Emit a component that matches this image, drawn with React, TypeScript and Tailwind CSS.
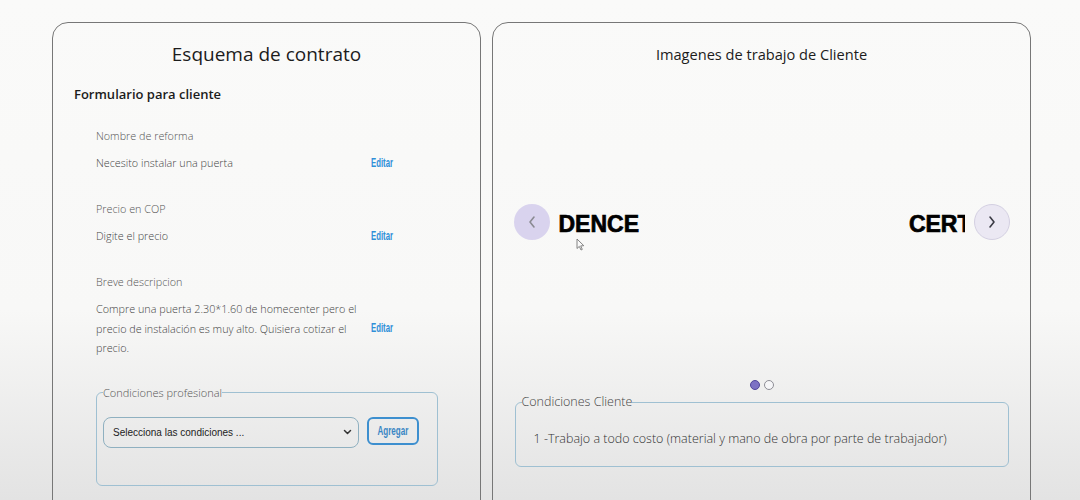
import React from "react";

const sans = "font-['Open_Sans',sans-serif]";

function Editar() {
  return (
    <span className="inline-block origin-left scale-x-[0.62] font-['Liberation_Sans',sans-serif] text-[12.5px] font-bold leading-[14px] text-[#2f8fd8]">
      Editar
    </span>
  );
}

function Row({ label, value }: { label: string; value: React.ReactNode }) {
  return (
    <div>
      <div className="text-[10.8px] font-light leading-[18px] text-[#555]">{label}</div>
      <div className="mt-[8px] grid grid-cols-[275px_auto] items-center">
        <div className="w-[262px] text-[10.8px] font-light leading-[19.5px] text-[#444]">{value}</div>
        <Editar />
      </div>
    </div>
  );
}

function Chevron({ dir, color }: { dir: "left" | "right"; color: string }) {
  return (
    <svg width="10" height="14" viewBox="0 0 10 14" fill="none">
      <path
        d={dir === "left" ? "M7 2 L3 7 L7 12" : "M3 2 L7 7 L3 12"}
        stroke={color}
        strokeWidth="1.6"
        strokeLinecap="round"
        strokeLinejoin="round"
      />
    </svg>
  );
}

export default function App() {
  return (
    <div
      className={`relative flex h-[500px] w-[1080px] gap-[11px] overflow-hidden bg-[linear-gradient(to_bottom,#fafaf9_0%,#f8f8f7_62%,#e3e3e3_100%)] pl-[52px] pt-[22px] ${sans}`}
    >
      {/* Left card */}
      <div className="h-[540px] w-[429px] shrink-0 rounded-[16px] border-[1.5px] border-[#777] pt-[17px]">
        <h1 className="text-center text-[19px] leading-[28px] text-[#1c1c1c]">Esquema de contrato</h1>
        <h2 className="mt-[16px] pl-[21px] text-[13px] font-semibold leading-[20px] text-[#1c1c1c]">
          Formulario para cliente
        </h2>
        <div className="mt-[23px] flex flex-col gap-[27.5px] pl-[43px]">
          <Row label="Nombre de reforma" value="Necesito instalar una puerta" />
          <Row label="Precio en COP" value="Digite el precio" />
          <Row
            label="Breve descripcion"
            value="Compre una puerta 2.30*1.60 de homecenter pero el precio de instalación es muy alto. Quisiera cotizar el precio."
          />
        </div>
        <fieldset className="ml-[43px] mt-[28px] w-[342px] rounded-[6px] border border-[#9fc0d2] px-[6px] pb-[37px]">
          <legend className="px-0 text-[11px] font-light leading-[14px] text-[#555]">Condiciones profesional</legend>
          <div className="mt-[17px] flex items-start gap-[8px]">
            <div className="flex h-[31px] w-[256px] items-center justify-between rounded-[8px] border border-[#8fb0c0] pl-[9px] pr-[6px] font-['Liberation_Sans',sans-serif] text-[10px] text-[#222]">
              <span>Selecciona las condiciones ...</span>
              <svg width="9" height="6" viewBox="0 0 9 6" fill="none">
                <path d="M1.5 1.5 L4.5 4.5 L7.5 1.5" stroke="#333" strokeWidth="1.5" strokeLinecap="round" strokeLinejoin="round" />
              </svg>
            </div>
            <div className="flex h-[28px] w-[52px] items-center justify-center rounded-[6px] border-2 border-[#3d8fcf]">
              <span className="inline-block scale-x-[0.62] font-['Liberation_Sans',sans-serif] text-[13px] font-bold text-[#3a86c4]">
                Agregar
              </span>
            </div>
          </div>
        </fieldset>
      </div>

      {/* Right card */}
      <div className="relative h-[540px] w-[539px] shrink-0 rounded-[16px] border-[1.5px] border-[#777] pt-[20px]">
        <h2 className="text-center text-[14.6px] leading-[22px] text-[#1c1c1c]">Imagenes de trabajo de Cliente</h2>
        <div className="mt-[139px] flex items-center px-[20.5px]">
          <div className="flex h-[36px] w-[36px] shrink-0 items-center justify-center rounded-full bg-[#d9d3ee]">
            <Chevron dir="left" color="#8a8a92" />
          </div>
          <div className="mr-[9px] flex flex-1 items-center justify-between overflow-hidden pl-[9px] pt-[3px] font-['Liberation_Sans',sans-serif] text-[23px] font-bold leading-[30px] text-black [-webkit-text-stroke:0.7px_black]">
            <span>DENCE</span>
            <span className="-mr-[7px]">CERT</span>
          </div>
          <div className="flex h-[36px] w-[36px] shrink-0 items-center justify-center rounded-full border border-[#d4d0e2] bg-[#ebe8f3]">
            <Chevron dir="right" color="#3a3a44" />
          </div>
        </div>
        <div className="mt-[140px] flex items-center justify-center gap-[4px]">
          <div className="h-[10px] w-[10px] rounded-full border-[1.5px] border-[#51479a] bg-[#7d72c4]" />
          <div className="h-[10px] w-[10px] rounded-full border-[1.5px] border-[#8e8e96] bg-[#f6f6f8]" />
        </div>
        <fieldset className="mx-[21.5px] mt-[4px] rounded-[6px] border border-[#9fc0d2] px-[6px] pb-[18px]">
          <legend className="px-0 text-[12.5px] font-light leading-[16px] text-[#444]">Condiciones Cliente</legend>
          <div className="ml-[12px] mt-[20px] text-[12.5px] font-light leading-[18px] text-[#333]">
            1 -Trabajo a todo costo (material y mano de obra por parte de trabajador)
          </div>
        </fieldset>
        {/* mouse cursor */}
        <svg className="absolute left-[83px] top-[215px]" width="9" height="13" viewBox="0 0 9 13" fill="none">
          <path d="M1 1 L1 10.5 L3.3 8.4 L5 12 L6.3 11.4 L4.7 7.9 L7.8 7.7 Z" fill="#fafafa" stroke="#777" strokeWidth="0.9" strokeLinejoin="round" />
        </svg>
      </div>
    </div>
  );
}
